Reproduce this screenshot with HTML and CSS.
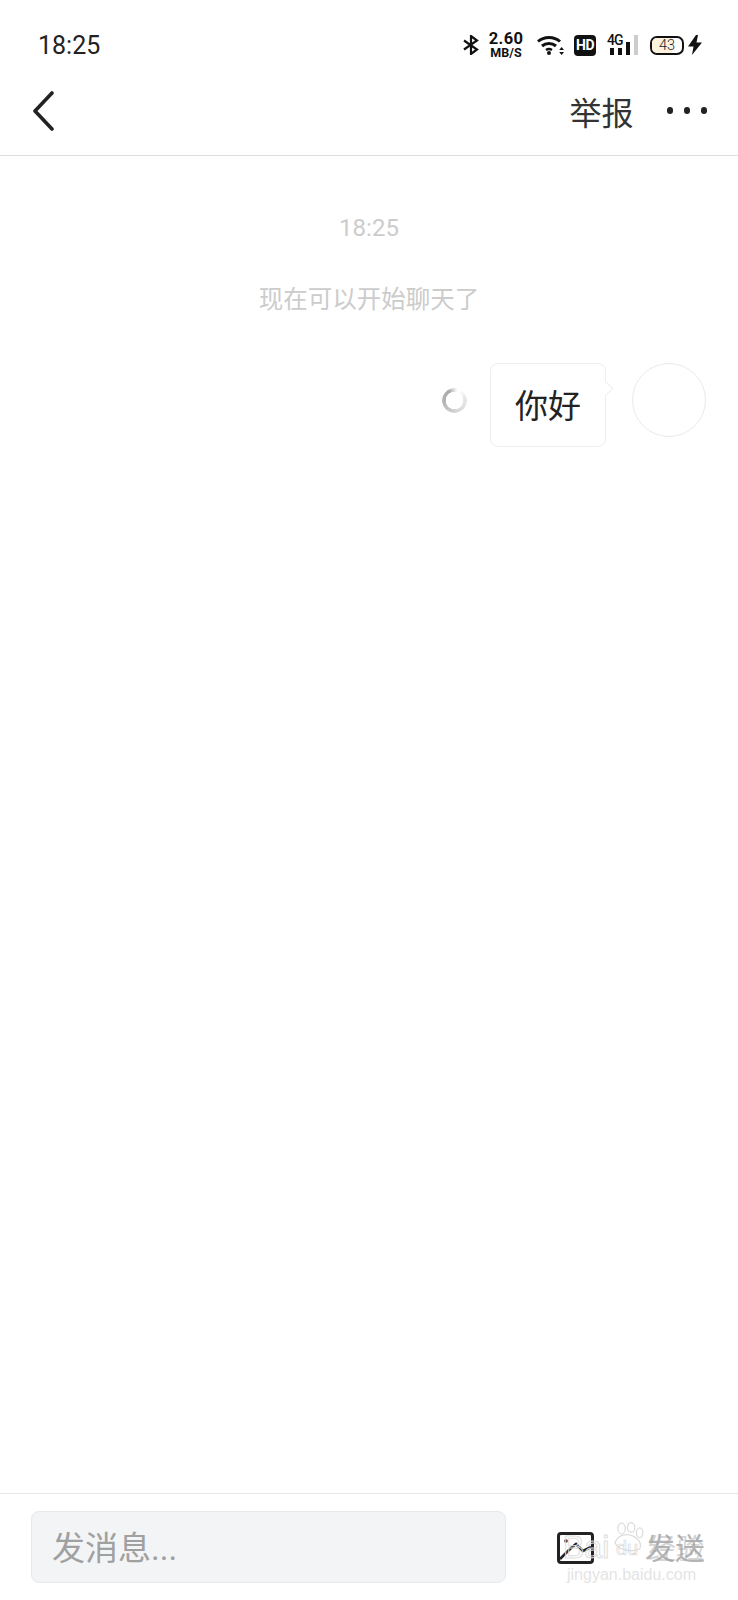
FILE: index.html
```html
<!DOCTYPE html>
<html lang="zh-CN">
<head>
  <meta charset="UTF-8" />
  <title>聊天</title>
  <link rel="stylesheet" href="styles.css">
</head>
<body>
  <div class="app">
    <div class="status-bar">
      <span class="clock">18:25</span>
      <div class="status-icons">
        <svg class="ic-bt" width="16" height="20" viewBox="0 0 16 20" fill="none" stroke="#111" stroke-width="2.2">
          <path d="M1 5.5 L14 14.5 L8 19 V1 L14 5.5 L1 14.5" />
        </svg>
        <div class="speed">
          <span class="speed-num">2.60</span>
          <span class="speed-unit">MB/S</span>
        </div>
        <svg class="ic-wifi" width="27" height="20" viewBox="0 0 27 20" fill="none" stroke="#111" stroke-width="3">
          <path d="M1 6.5 C7 1 17 1 23 6.5" />
          <path d="M5 11 C9 7.5 15 7.5 19 11" />
          <path d="M9 15 C10.8 13.8 13.2 13.8 15 15" stroke-width="2.4" />
          <circle cx="12" cy="18" r="2" fill="#111" stroke="none" />
          <path d="M27 15 L24.6 12 L22.2 15 Z M27 17 L24.6 20 L22.2 17 Z" fill="#111" stroke="none" />
        </svg>
        <span class="hd">HD</span>
        <div class="signal">
          <span class="signal-4g">4G</span>
          <i class="bar bar-1"></i>
          <i class="bar bar-2"></i>
          <i class="bar bar-3"></i>
          <i class="bar bar-4"></i>
        </div>
        <div class="battery"><span class="battery-fill"></span><span class="battery-num">43</span></div>
        <svg class="ic-bolt" width="14" height="20" viewBox="0 0 14 20">
          <path d="M8 0 L0 11.5 H5.5 L4 20 L14 7.5 H8.5 L10 0 Z" fill="#111" />
        </svg>
      </div>
    </div>

    <div class="nav">
      <svg class="back" width="22" height="40" viewBox="0 0 22 40" fill="none" stroke="#222" stroke-width="3.6" stroke-linecap="round" stroke-linejoin="round">
        <path d="M20 2 L3 20 L20 38" />
      </svg>
      <span class="report">举报</span>
      <div class="more"><i></i><i></i><i></i></div>
    </div>

    <div class="messages">
      <p class="msg-time">18:25</p>
      <p class="msg-system">现在可以开始聊天了</p>
      <div class="msg-row">
        <span class="spinner"></span>
        <div class="bubble">你好</div>
        <div class="avatar"></div>
      </div>
    </div>

    <div class="composer">
      <div class="input">发消息...</div>
      <svg class="ic-image" width="37" height="32" viewBox="0 0 37 32" fill="none" stroke="#222" stroke-width="3">
        <rect x="1.5" y="1.5" width="34" height="29" rx="2.5" />
        <path d="M3 27 L14 16 L19 12 L26 19 L34 15" stroke-width="2.6" />
        <circle cx="9" cy="9" r="1.8" fill="#222" stroke="none" />
      </svg>
      <span class="send">发送</span>

      <div class="watermark">
        <span class="wm-bai">Bai</span>
        <svg class="wm-paw" width="34" height="30" viewBox="0 0 32 28" fill="none" stroke="#dcdcdc" stroke-width="1.2">
          <ellipse cx="9" cy="6" rx="3.5" ry="5" />
          <ellipse cx="18" cy="5" rx="3.5" ry="4.5" />
          <ellipse cx="26" cy="10" rx="3" ry="4.5" />
          <path d="M3 20 C4 13 12 11 16 12 C23 13 29 20 26 25 C22 28 8 28 3 20 Z" />
        </svg>
        <span class="wm-du">du</span>
        <span class="wm-jy">经验</span>
        <span class="wm-url">jingyan.baidu.com</span>
      </div>
    </div>
  </div>
</body>
</html>
```

FILE: styles.css
```css
* {
  margin: 0;
  padding: 0;
  box-sizing: border-box;
}

body {
  background: #fff;
  font-family: Roboto, 'Noto Sans CJK SC', sans-serif;
  color: #222;
}

.app {
  height: 1600px;
  display: flex;
  flex-direction: column;
}

/* status bar */
.status-bar {
  height: 72px;
  padding: 18px 36px 0 38px;
  display: flex;
  align-items: center;
  justify-content: space-between;
}

.clock {
  font-size: 25px;
  color: #222;
}

.status-icons {
  display: flex;
  align-items: center;
}

.ic-bt {
  margin-right: 10px;
}

.speed {
  width: 34px;
  display: flex;
  flex-direction: column;
  align-items: center;
  color: #111;
  font-weight: 700;
  margin-right: 14px;
}

.speed-num {
  font-size: 16.5px;
  line-height: 14px;
  letter-spacing: 0.3px;
}

.speed-unit {
  font-size: 12.5px;
  line-height: 11px;
  margin-top: 1px;
}

.ic-wifi {
  margin-right: 10px;
}

.hd {
  width: 22px;
  height: 21px;
  background: #111;
  color: #fff;
  border-radius: 4px;
  font-size: 14px;
  font-weight: 700;
  line-height: 21px;
  text-align: center;
  letter-spacing: -0.5px;
  margin-right: 11px;
}

.signal {
  width: 32px;
  height: 20px;
  position: relative;
  margin-right: 11px;
}

.signal-4g {
  position: absolute;
  left: 0;
  top: -2px;
  font-size: 14px;
  font-weight: 500;
  line-height: 14px;
  letter-spacing: -1px;
  color: #111;
}

.bar {
  position: absolute;
  bottom: 0;
  width: 3.5px;
  background: #111;
}

.bar-1 { left: 3px; height: 7px; }
.bar-2 { left: 11px; height: 7px; }
.bar-3 { left: 19px; height: 13px; }
.bar-4 { left: 27px; height: 20px; background: #ccc; }

.battery {
  width: 34px;
  height: 19px;
  border: 2px solid #111;
  border-radius: 7px;
  position: relative;
  overflow: hidden;
  margin-right: 4px;
  display: flex;
  align-items: center;
  justify-content: center;
}

.battery-fill {
  position: absolute;
  left: 0;
  top: 0;
  bottom: 0;
  width: 68%;
  background: #fbf1dc;
}

.battery-num {
  position: relative;
  font-size: 14.5px;
  font-weight: 300;
  color: #222;
}

/* nav */
.nav {
  height: 84px;
  padding: 0 31px 6px 32px;
  border-bottom: 1px solid #ddd;
  display: flex;
  align-items: center;
}

.back {
  margin-right: auto;
}

.report {
  font-size: 32px;
  color: #333;
  margin-right: 33px;
}

.more {
  display: flex;
  gap: 10.5px;
}

.more i {
  width: 6.5px;
  height: 6.5px;
  border-radius: 50%;
  background: #222;
}

/* messages */
.messages {
  flex: 1;
  padding-top: 57px;
}

.msg-time {
  font-size: 24px;
  line-height: 30px;
  color: #ccc;
  text-align: center;
}

.msg-system {
  margin-top: 42px;
  font-size: 24.5px;
  line-height: 30px;
  color: #ccc;
  text-align: center;
}

.msg-row {
  margin-top: 48px;
  padding-right: 32px;
  display: flex;
  justify-content: flex-end;
  align-items: flex-start;
}

.spinner {
  width: 25px;
  height: 25px;
  margin: 25px 23px 0 0;
  border-radius: 50%;
  background: conic-gradient(from 30deg, #fff 0deg, #e6e6e6 50deg, #ddd 120deg, #b5b5b5 230deg, #aaa 300deg, #fff 345deg);
  -webkit-mask: radial-gradient(circle, transparent 8.5px, #000 9px);
  mask: radial-gradient(circle, transparent 8.5px, #000 9px);
}

.bubble {
  width: 116px;
  height: 84px;
  border: 1px solid #eee;
  border-radius: 8px;
  background: #fff;
  font-size: 33px;
  line-height: 85px;
  text-align: center;
  color: #222;
  position: relative;
  margin-right: 26px;
}

.bubble::after {
  content: "";
  position: absolute;
  right: -6px;
  top: 19px;
  width: 10px;
  height: 10px;
  background: #fff;
  border-top: 1px solid #eee;
  border-right: 1px solid #eee;
  transform: rotate(45deg);
}

.avatar {
  width: 74px;
  height: 74px;
  border: 1.5px solid #eaeaea;
  border-radius: 50%;
}

/* composer */
.composer {
  height: 107px;
  padding: 17px 33px 0 31px;
  border-top: 1px solid #e6e6e6;
  display: flex;
  align-items: flex-start;
  position: relative;
}

.input {
  width: 475px;
  height: 72px;
  padding-left: 20px;
  background: #f3f4f6;
  border: 1px solid #e8e9eb;
  border-radius: 8px;
  font-size: 33px;
  line-height: 73px;
  color: #a0a0a0;
}

.ic-image {
  margin: 21px 0 0 51px;
}

.send {
  margin: 20px 0 0 auto;
  font-size: 30px;
  line-height: 36px;
  color: #b4b4b4;
}

/* watermark sits on top of the composer */
.watermark {
  position: absolute;
  left: 560px;
  top: 28px;
  width: 146px;
  height: 70px;
  pointer-events: none;
}

.wm-bai,
.wm-du {
  position: absolute;
  color: transparent;
  font-family: 'Liberation Sans', sans-serif;
}

.wm-bai {
  left: 3px;
  top: 9px;
  font-size: 32px;
  line-height: 32px;
  -webkit-text-stroke: 1px #dedede;
}

.wm-du {
  left: 56px;
  top: 14px;
  font-size: 20px;
  line-height: 24px;
  -webkit-text-stroke: 0.7px #d8d8d8;
}

.wm-paw {
  position: absolute;
  left: 52px;
  top: 0;
}

.wm-jy {
  position: absolute;
  left: 88px;
  top: 12px;
  font-size: 28px;
  line-height: 32px;
  color: rgba(160, 160, 160, 0.45);
}

.wm-url {
  position: absolute;
  left: 7px;
  top: 43px;
  font-size: 16px;
  line-height: 20px;
  font-family: 'Liberation Sans', sans-serif;
  color: #e4e4e4;
}
```
